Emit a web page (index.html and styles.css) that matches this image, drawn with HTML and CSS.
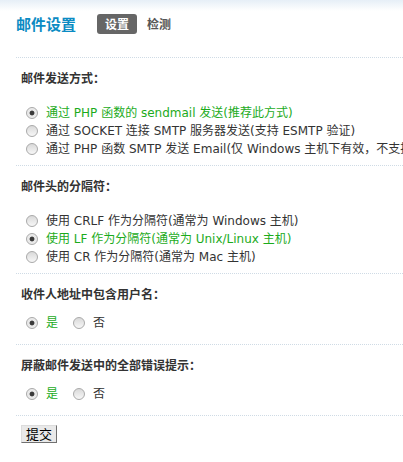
FILE: index.html
```html
<!DOCTYPE html>
<html lang="zh-CN">
<head>
    <meta charset="UTF-8">
    <title>邮件设置</title>
    <link rel="stylesheet" href="styles.css">
</head>
<body>
    <div class="wrap">
        <!-- title and tabs -->
        <div class="itemtitle">
            <h3>邮件设置</h3>
            <ul class="tabs">
                <li class="current"><span>设置</span></li>
                <li><span>检测</span></li>
            </ul>
        </div>

        <form class="settings">
            <div class="section">
                <div class="sec-title">邮件发送方式：</div>
                <ul class="options">
                    <li class="checked"><label><input type="radio" name="mailsend" checked>通过 PHP 函数的 sendmail 发送(推荐此方式)</label></li>
                    <li><label><input type="radio" name="mailsend">通过 SOCKET 连接 SMTP 服务器发送(支持 ESMTP 验证)</label></li>
                    <li><label><input type="radio" name="mailsend">通过 PHP 函数 SMTP 发送 Email(仅 Windows 主机下有效，不支持 ESMTP 验证)</label></li>
                </ul>
            </div>

            <div class="section">
                <div class="sec-title">邮件头的分隔符：</div>
                <ul class="options">
                    <li><label><input type="radio" name="maildelimiter">使用 CRLF 作为分隔符(通常为 Windows 主机)</label></li>
                    <li class="checked"><label><input type="radio" name="maildelimiter" checked>使用 LF 作为分隔符(通常为 Unix/Linux 主机)</label></li>
                    <li><label><input type="radio" name="maildelimiter">使用 CR 作为分隔符(通常为 Mac 主机)</label></li>
                </ul>
            </div>

            <div class="section">
                <div class="sec-title">收件人地址中包含用户名：</div>
                <ul class="options inline">
                    <li class="checked"><label><input type="radio" name="mailusername" checked>是</label></li>
                    <li><label><input type="radio" name="mailusername">否</label></li>
                </ul>
            </div>

            <div class="section">
                <div class="sec-title">屏蔽邮件发送中的全部错误提示：</div>
                <ul class="options inline">
                    <li class="checked"><label><input type="radio" name="mailsilent" checked>是</label></li>
                    <li><label><input type="radio" name="mailsilent">否</label></li>
                </ul>
            </div>

            <div class="submit-row">
                <button type="button" class="btn">提交</button>
            </div>
        </form>
    </div>
</body>
</html>
```

FILE: styles.css
```css
body {
    margin: 0;
    background: linear-gradient(#e6eff7 0, #ffffff 11px) no-repeat;
    font: 12px "DejaVu Sans", "Noto Sans CJK SC", sans-serif;
    color: #333;
    overflow: hidden; /* long option text is cut at the window edge */
}
ul {
    margin: 0;
    padding: 0;
    list-style: none;
}
.wrap {
    padding-left: 16px;
}

/* header */
.itemtitle {
    display: flex;
    align-items: center;
    padding: 9px 0 18px;
    height: 30px;
}
.itemtitle h3 {
    margin: 0 21px 0 0;
    font-size: 15px;
    line-height: 30px;
    color: #0b8bc3;
    font-family: "Noto Sans CJK SC", sans-serif;
}
.tabs {
    display: flex;
    gap: 10px;
}
.tabs li span {
    display: block;
    height: 20px;
    line-height: 20px;
    font-weight: bold;
    color: #555;
    font-family: "Noto Sans CJK SC", sans-serif;
}
.tabs li.current span {
    padding: 0 8px;
    background: #666;
    color: #fff;
    border-radius: 3px;
}

/* sections */
.section {
    border-top: 1px dotted #cfdbe5;
}
.sec-title {
    padding: 11px 5px 0;
    line-height: 18px;
    font-weight: bold;
    font-family: "Noto Sans CJK SC", sans-serif;
}
.options {
    padding: 17px 5px 7px;
    white-space: nowrap;
}
.options li {
    height: 18px;
    line-height: 18px;
}
.options label {
    display: inline-flex;
    align-items: center;
}
.options .checked {
    color: #1cab1c;
}
.options.inline {
    display: flex;
    gap: 10px;
    padding: 11px 5px 12px;
}

.options input {
    appearance: none;
    -webkit-appearance: none;
    width: 12px;
    height: 12px;
    margin: 0 8px 0 5px;
    border: 1px solid #a9a9a9;
    border-radius: 50%;
    background: linear-gradient(#d9d9d9, #f7f7f7);
}
.options input:checked {
    background: radial-gradient(circle, #3a3a3a 0, #3a3a3a 2px, #e6e6e6 2.8px, #f4f4f4 100%);
}

.submit-row {
    border-top: 1px dotted #cfdbe5;
    padding: 9px 5px 0;
}
.btn {
    display: block;
    height: 18px;
    padding: 0 4px;
    font: 13px/14px "Noto Sans CJK SC", sans-serif;
    color: #000;
    background: #e9e9e9;
    border: 1px solid;
    border-color: #dcdcdc #707070 #707070 #dcdcdc;
    border-radius: 0;
}
```
